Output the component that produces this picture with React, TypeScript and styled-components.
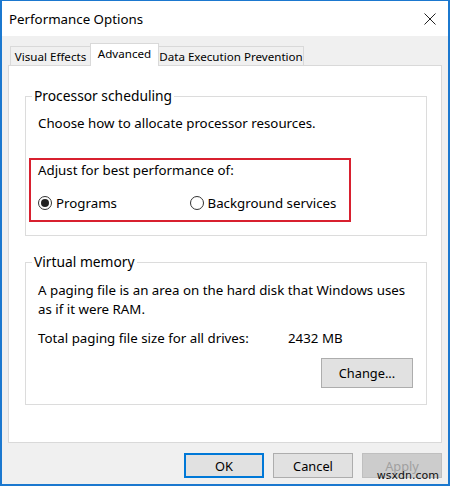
import React from 'react';
import styled, { createGlobalStyle } from 'styled-components';

const GlobalStyle = createGlobalStyle`
  html, body {
    margin: 0;
    padding: 0;
    background: #ffffff;
  }
  * {
    box-sizing: border-box;
  }
`;

const Window = styled.div`
  width: 450px;
  height: 486px;
  background: #f0f0f0;
  border: 2px solid #1b78cf;
  border-top: 1px solid #1b78cf;
  font-family: "Segoe UI", "Noto Sans", sans-serif;
  color: #000;
  display: flex;
  flex-direction: column;
  position: relative;
`;

const TitleBar = styled.div`
  height: 35px;
  background: #ffffff;
  display: flex;
  align-items: center;
  justify-content: space-between;
  padding: 0 12px 0 7px;
`;

const Title = styled.span`
  font-size: 13.3px;
`;

const CloseButton = styled.span`
  display: flex;
  width: 12px;
  height: 12px;
`;

const Body = styled.div`
  padding: 7px 6px 0 6px;
  display: flex;
  flex-direction: column;
`;

const TabStrip = styled.div`
  display: flex;
  align-items: flex-end;
  height: 22px;
  padding-left: 2px;
`;

const Tab = styled.div<{ $active?: boolean; $width: number }>`
  width: ${(p) => p.$width}px;
  height: ${(p) => (p.$active ? 23 : 19)}px;
  margin-bottom: ${(p) => (p.$active ? -1 : 0)}px;
  margin-left: ${(p) => (p.$active ? -1 : 0)}px;
  margin-right: ${(p) => (p.$active ? -1 : 0)}px;
  position: relative;
  z-index: ${(p) => (p.$active ? 2 : 1)};
  background: ${(p) => (p.$active ? '#ffffff' : '#f0f0f0')};
  border: 1px solid #d9d9d9;
  border-bottom: none;
  font-size: 11.6px;
  white-space: nowrap;
  display: flex;
  align-items: center;
  justify-content: center;
  padding-bottom: ${(p) => (p.$active ? 3 : 0)}px;
`;

const Panel = styled.div`
  height: 378px;
  background: #ffffff;
  border: 1px solid #d9d9d9;
  padding: 20px 14px 0 16px;
  display: flex;
  flex-direction: column;
`;

const Group = styled.fieldset<{ $gap?: number }>`
  margin: ${(p) => p.$gap ?? 0}px 0 0 0;
  border: 1px solid #dcdcdc;
  padding: 0 12px 0 12px;
  font-size: 13.3px;
  min-width: 0;
`;

const Legend = styled.legend`
  margin-left: -6px;
  padding: 0 2px;
  line-height: 20px;
  font-size: 13.8px;
`;

const Text = styled.div<{ $top?: number }>`
  margin-top: ${(p) => p.$top ?? 0}px;
  line-height: 19px;
  font-size: 13.3px;
`;

const Highlight = styled.div`
  margin: 25px 0 13px -9px;
  width: 322px;
  height: 64px;
  border: 2px solid #d8202f;
  padding: 0 0 0 7px;
  display: flex;
  flex-direction: column;
`;

const HighlightLine = styled.div`
  line-height: 20px;
  height: 20px;
  font-size: 13.3px;
`;

const RadioRow = styled.div`
  display: flex;
  align-items: center;
  margin-top: 13px;
  height: 20px;
`;

const RadioOption = styled.label<{ $width: number }>`
  display: flex;
  align-items: center;
  width: ${(p) => p.$width}px;
  font-size: 13.3px;
  gap: 4px;
`;

const RadioCircle = styled.span<{ $checked?: boolean }>`
  width: 14px;
  height: 14px;
  border-radius: 50%;
  border: 1px solid #333;
  background: #fff;
  display: flex;
  align-items: center;
  justify-content: center;

  &::after {
    content: '';
    width: 8px;
    height: 8px;
    border-radius: 50%;
    background: ${(p) => (p.$checked ? '#222' : 'transparent')};
  }
`;

const SizeRow = styled.div`
  display: flex;
  margin-top: 10px;
  line-height: 19px;
  font-size: 13.3px;
`;

const SizeLabel = styled.span`
  width: 250px;
`;

const ButtonRow = styled.div<{ $top: number; $bottom?: number; $gap?: number; $right?: number }>`
  display: flex;
  justify-content: flex-end;
  gap: ${(p) => p.$gap ?? 0}px;
  margin-top: ${(p) => p.$top}px;
  margin-bottom: ${(p) => p.$bottom ?? 0}px;
  margin-right: ${(p) => p.$right ?? 0}px;
`;

const Button = styled.button<{ $width: number; $height: number; $primary?: boolean }>`
  width: ${(p) => p.$width}px;
  height: ${(p) => p.$height}px;
  background: #e1e1e1;
  border: ${(p) => (p.$primary ? '2px solid #0078d7' : '1px solid #adadad')};
  font-family: "Segoe UI", "Noto Sans", sans-serif;
  font-size: 12.8px;
  color: #000;
  padding: 0;
  cursor: default;

  &:disabled {
    background: #cccccc;
    border-color: #bfbfbf;
    color: #a0a0a0;
  }
`;

const Watermark = styled.span`
  position: absolute;
  right: 9px;
  bottom: 2px;
  font-family: "DejaVu Sans", sans-serif;
  font-size: 11px;
  color: #111;
  line-height: 12px;
`;

const App: React.FC = () => {
  return (
    <>
      <GlobalStyle />
      <Window>
        <TitleBar>
          <Title>Performance Options</Title>
          <CloseButton>
            <svg width="12" height="12" viewBox="0 0 12 12">
              <path d="M0.5 0.5 L11.5 11.5 M11.5 0.5 L0.5 11.5" stroke="#222" strokeWidth="1" fill="none" />
            </svg>
          </CloseButton>
        </TitleBar>

        <Body>
          <TabStrip>
            <Tab $width={81}>Visual Effects</Tab>
            <Tab $width={69} $active>Advanced</Tab>
            <Tab $width={146}>Data Execution Prevention</Tab>
          </TabStrip>

          <Panel>
            <Group>
              <Legend>Processor scheduling</Legend>
              <Text $top={8}>Choose how to allocate processor resources.</Text>
              <Highlight>
                <HighlightLine>Adjust for best performance of:</HighlightLine>
                <RadioRow>
                  <RadioOption $width={152}>
                    <RadioCircle $checked />
                    Programs
                  </RadioOption>
                  <RadioOption $width={160}>
                    <RadioCircle />
                    Background services
                  </RadioOption>
                </RadioRow>
              </Highlight>
            </Group>

            <Group $gap={16}>
              <Legend>Virtual memory</Legend>
              <Text $top={9}>
                A paging file is an area on the hard disk that Windows uses
                <br />
                as if it were RAM.
              </Text>
              <SizeRow>
                <SizeLabel>Total paging file size for all drives:</SizeLabel>
                <span>2432 MB</span>
              </SizeRow>
              <ButtonRow $top={10} $bottom={16} $right={1}>
                <Button $width={92} $height={30}>Change...</Button>
              </ButtonRow>
            </Group>
          </Panel>

          <ButtonRow $top={10} $gap={9}>
            <Button $width={80} $height={25} $primary>OK</Button>
            <Button $width={80} $height={25}>Cancel</Button>
            <Button $width={80} $height={25} disabled>Apply</Button>
          </ButtonRow>
        </Body>
        <Watermark>wsxdn.com</Watermark>
      </Window>
    </>
  );
};

export default App;
